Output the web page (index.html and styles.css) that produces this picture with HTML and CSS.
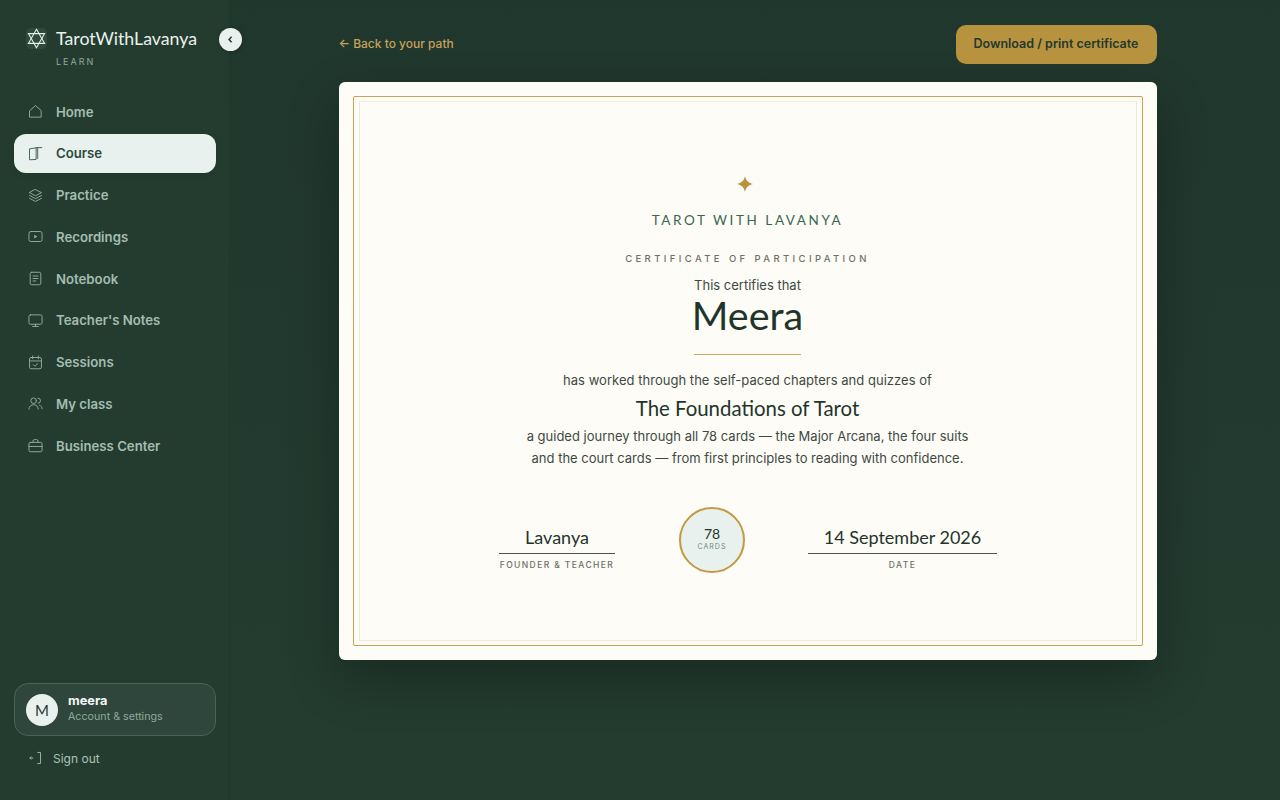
FILE: index.html
```html
<!DOCTYPE html>
<html lang="en">
<head>
<meta charset="utf-8">
<title>Certificate</title>
<link rel="stylesheet" href="styles.css">
</head>
<body>
<div class="app">
  <aside class="sidebar">
    <div class="brand">
      <span class="brand-mark">
        <svg viewBox="0 0 24 24" width="21" height="21" class="ic-star"><path d="M12 1.5 21.2 17.5H2.8Z"/><path d="M12 22.5 2.8 6.5H21.2Z"/></svg>
      </span>
      <div class="brand-text">
        <div class="brand-name">TarotWithLavanya</div>
        <div class="brand-sub">LEARN</div>
      </div>
    </div>
    <button class="collapse" aria-label="Collapse"><svg viewBox="0 0 12 12" width="11" height="11"><path d="M7.200 3 4.400 6l2.800 3"/></svg></button>
    <nav class="nav">
      <a class="nav-item"><svg class="ic" viewBox="0 0 24 24"><path d="M3 10.500 12 2.500l9 8V21H3Z"/></svg><span>Home</span></a>
      <a class="nav-item active"><svg class="ic" viewBox="0 0 24 24"><path d="M3 4.500 13 3V21.500L3 22Z"/><path d="M13 2.500h9M15.500 2.500V20"/></svg><span>Course</span></a>
      <a class="nav-item"><svg class="ic" viewBox="0 0 24 24"><path d="M12 2.500 21.500 7.500 12 12.500 2.500 7.500Z"/><path d="M2.500 12l9.500 5 9.500-5M2.500 16.500l9.500 5 9.500-5"/></svg><span>Practice</span></a>
      <a class="nav-item"><svg class="ic" viewBox="0 0 24 24"><rect x="1.500" y="4" width="21" height="16" rx="3"/><path class="fill" d="M10 9 15 12l-5 3Z"/></svg><span>Recordings</span></a>
      <a class="nav-item"><svg class="ic" viewBox="0 0 24 24"><rect x="3.500" y="2" width="17" height="20" rx="2.500"/><path d="M8 8h8M8 12h8M8 16h4.500"/></svg><span>Notebook</span></a>
      <a class="nav-item"><svg class="ic" viewBox="0 0 24 24"><rect x="1.500" y="3" width="21" height="15" rx="2.500"/><path d="M12 18V21.500M7.500 21.500h9"/></svg><span>Teacher's Notes</span></a>
      <a class="nav-item"><svg class="ic" viewBox="0 0 24 24"><rect x="2.500" y="4" width="19" height="18" rx="2.500"/><path d="M2.500 9.500h19M7.500 1.500v4.500M16.500 1.500v4.500M8.500 15.500l2.500 2.500 4.500-4"/></svg><span>Sessions</span></a>
      <a class="nav-item"><svg class="ic" viewBox="0 0 24 24"><circle cx="9" cy="7.500" r="4.500"/><path d="M1.500 21c.5-4.500 3.200-7 7.500-7s7 2.500 7.500 7"/><path d="M16 3.500a4 4 0 0 1 0 8M18.500 14.500c2.200.8 3.500 3 4 6"/></svg><span>My class</span></a>
      <a class="nav-item"><svg class="ic" viewBox="0 0 24 24"><rect x="1.500" y="7" width="21" height="15" rx="2.500"/><path d="M8 7V5a2.500 2.500 0 0 1 2.500-2.500h3A2.500 2.500 0 0 1 16 5v2M1.500 13.500h21"/></svg><span>Business Center</span></a>
    </nav>
    <div class="account">
      <div class="avatar">M</div>
      <div>
        <div class="account-name">meera</div>
        <div class="account-sub">Account &amp; settings</div>
      </div>
    </div>
    <a class="signout"><svg class="ic-out" viewBox="0 0 24 24"><path d="M9 12H3M5.500 9.500 3 12l2.500 2.500M16 2.500h5.500v19H16"/></svg><span>Sign out</span></a>
  </aside>
  <main class="main">
    <div class="topbar">
      <a class="back">← Back to your path</a>
      <button class="download">Download / print certificate</button>
    </div>
    <section class="cert">
      <div class="frame">
        <div class="frame-inner">
          <svg class="spark" viewBox="0 0 16 16" width="16" height="16"><path d="M8 0C8.800 4.200 10.800 6.800 16 8 10.800 9.200 8.800 11.800 8 16 7.200 11.800 5.200 9.200 0 8 5.200 6.800 7.200 4.200 8 0Z"/></svg>
          <div class="org">TAROT WITH LAVANYA</div>
          <div class="kind">CERTIFICATE OF PARTICIPATION</div>
          <div class="certifies">This certifies that</div>
          <div class="person">Meera</div>
          <div class="rule"></div>
          <p class="line">has worked through the self-paced chapters and quizzes of</p>
          <div class="course">The Foundations of Tarot</div>
          <p class="desc">a guided journey through all 78 cards — the Major Arcana, the four suits<br>and the court cards — from first principles to reading with confidence.</p>
          <div class="signs">
            <div class="sign sign-a"><div class="sign-val">Lavanya</div><div class="sign-label">FOUNDER &amp; TEACHER</div></div>
            <div class="seal"><div class="seal-num">78</div><div class="seal-txt">CARDS</div></div>
            <div class="sign sign-b"><div class="sign-val">14 September 2026</div><div class="sign-label">DATE</div></div>
          </div>
        </div>
      </div>
    </section>
  </main>
</div>
</body>
</html>
```
FILE: styles.css
```css
* { box-sizing: border-box; }
html, body { margin: 0; height: 100%; }
body {
  font-family: "Inter", "Liberation Sans", sans-serif;
  background: #22392f;
  color: #1f352b;
  overflow: hidden;
}
.app { display: flex; height: 800px; }

.sidebar {
  position: relative;
  width: 230px;
  flex: none;
  display: flex;
  flex-direction: column;
  padding: 28px 13px 0 14px;
  background: #243c30;
  border-right: 1px solid #20372c;
}
.brand { display: flex; align-items: flex-start; gap: 9px; padding-left: 12px; height: 66px; }
.brand-mark { width: 21px; height: 21px; display: block; flex: none; background: #2e4a3d; border-radius: 5px; }
.ic-star { display: block; fill: none; stroke: #e4eee9; stroke-width: 1.3; }
.brand-name { font-family: "Lato", sans-serif; font-size: 17.750px; line-height: 21px; color: #eaf1ed; }
.brand-sub { margin-top: 7px; font-size: 9px; line-height: 11px; letter-spacing: 2px; color: #8fa99c; }
.collapse {
  position: absolute;
  left: 219px;
  top: 28px;
  width: 23px;
  height: 23px;
  padding: 0;
  display: flex;
  align-items: center;
  justify-content: center;
  border: 0;
  border-radius: 50%;
  background: #e8f1ee;
  box-shadow: 0 1px 4px rgba(0,0,0,.25);
}
.collapse svg { fill: none; stroke: #24382e; stroke-width: 1.6; }

.nav { display: flex; flex-direction: column; gap: 2.750px; margin-top: -2px; }
.nav-item {
  display: flex;
  align-items: center;
  gap: 13px;
  height: 39px;
  padding-left: 14px;
  border-radius: 12px;
  font-size: 13.200px;
  font-weight: 600;
  color: #a3bdb0;
}
.nav-item.active { background: #e8f1ee; color: #2c4a3c; box-shadow: 0 1px 6px rgba(0,0,0,.12); }
.ic { width: 15px; height: 15px; flex: none; fill: none; stroke: currentColor; stroke-width: 1.500; stroke-linecap: round; stroke-linejoin: round; opacity: .88; }
.ic .fill { fill: currentColor; stroke: none; }

.account {
  display: flex;
  align-items: center;
  gap: 10px;
  margin-top: auto;
  height: 53px;
  padding: 0 11px;
  border: 1px solid #4a6356;
  border-radius: 14px;
  background: #2e463b;
}
.avatar {
  width: 32px;
  height: 32px;
  flex: none;
  display: flex;
  align-items: center;
  justify-content: center;
  border-radius: 50%;
  background: #e8f1ee;
  font-family: "Lato", sans-serif;
  font-weight: 400;
  font-size: 15px;
  color: #24382e;
}
.account-name { margin-top: -2px; font-size: 12.800px; line-height: 16px; font-weight: 700; color: #f2f6f3; }
.account-sub { font-size: 10.700px; line-height: 15px; color: #8fa99c; }
.signout { display: flex; align-items: center; gap: 11px; height: 20px; margin: 12px 0 32px; padding-left: 14px; font-size: 12px; color: #a9c2b6; }
.ic-out { width: 14px; height: 14px; fill: none; stroke: currentColor; stroke-width: 1.500; }

.main { flex: 1; padding: 25px 0 0 108.500px; background: linear-gradient(180deg, #20372e, #243c30); }
.topbar { width: 818px; height: 39px; display: flex; align-items: center; justify-content: space-between; }
.back { margin-top: -2px; font-size: 12px; font-weight: 500; color: #c5a25a; }
.download {
  width: 201px;
  height: 39px;
  padding: 0 0 2px;
  border: 0;
  border-radius: 10px;
  background: #b8933f;
  font-family: inherit;
  font-size: 12.500px;
  font-weight: 600;
  color: #24382e;
}
.cert {
  width: 818px;
  height: 578px;
  margin-top: 18px;
  padding: 14px;
  border-radius: 6px;
  background: #fdfcf6;
  box-shadow: 0 20px 50px rgba(0,0,0,.28);
}
.frame { height: 100%; padding: 4px 5px; border: 1px solid #c9a254; border-radius: 2px; }
.frame-inner {
  height: 100%;
  display: flex;
  flex-direction: column;
  align-items: center;
  padding-top: 74px;
  border: 1px solid #f0e8d8;
}
.spark { display: block; margin-right: 6px; fill: #b8923f; }
.org { margin-top: 20px; font-family: "Lato", sans-serif; font-size: 13.500px; line-height: 16px; letter-spacing: 2.580px; color: #3a6650; }
.kind { margin-top: 25px; font-size: 9.500px; line-height: 12px; letter-spacing: 3.400px; font-weight: 500; color: #6f706a; }
.certifies { margin-top: 11px; font-size: 13px; line-height: 18px; color: #3d4a43; }
.person { margin-top: -1px; font-family: "Lato", sans-serif; font-size: 39.500px; line-height: 44px; color: #1f352b; }
.rule { width: 107px; height: 1px; margin-top: 17px; background: #cfa95f; }
.line { margin: 16px 0 0; font-size: 13px; line-height: 18px; letter-spacing: .03px; color: #3d4a43; }
.course { margin-top: 7px; font-family: "Lato", sans-serif; font-size: 20.400px; line-height: 24px; color: #1f352b; }
.desc { margin: 5px 0 0; font-size: 13px; line-height: 22px; text-align: center; color: #3d4a43; }
.signs { display: flex; align-items: flex-start; gap: 64px; margin: 38px 0 0 1px; }
.sign { margin-top: 15px; text-align: center; }
.sign-a { width: 116px; }
.sign-b { width: 189px; margin-left: -1px; }
.sign-val { height: 32px; border-bottom: 1px solid #47574e; font-family: "Lato", sans-serif; font-size: 18px; line-height: 30px; color: #1f352b; }
.sign-label { margin-top: 6px; font-size: 8.500px; line-height: 11px; letter-spacing: 1.400px; font-weight: 500; white-space: nowrap; color: #6f706a; }
.seal {
  width: 66px;
  height: 66px;
  display: flex;
  flex-direction: column;
  align-items: center;
  justify-content: center;
  border: 2px solid #c29a45;
  border-radius: 50%;
  background: #e8f1ee;
}
.seal-num { margin-top: -2px; font-family: "Lato", sans-serif; font-size: 14px; line-height: 15px; color: #1f352b; }
.seal-txt { margin-top: 1px; font-size: 7px; line-height: 10px; letter-spacing: 1px; color: #6f8a7c; }
```
